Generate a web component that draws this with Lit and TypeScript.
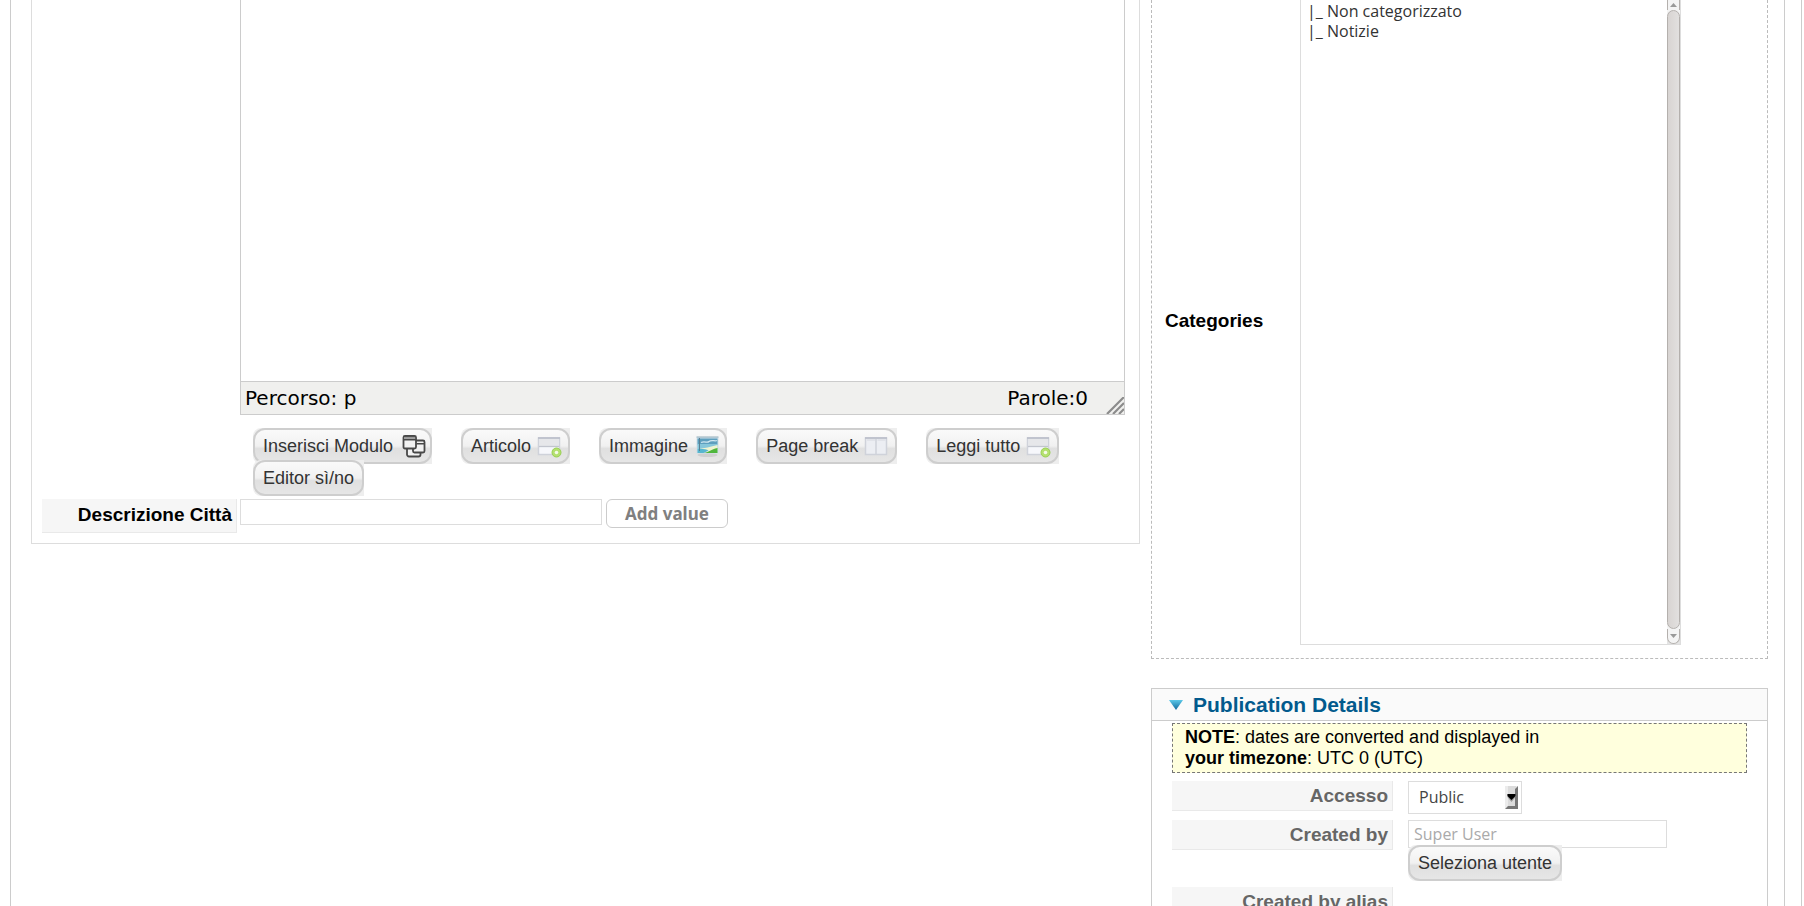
import { LitElement, html, css, svg, nothing } from "lit";
import { customElement, property } from "lit/decorators.js";

const moduleIcon = svg`
  <g fill="#f2f2f2" stroke="#484848" stroke-width="1.800" stroke-linejoin="round">
    <rect x="8" y="12" width="13.500" height="10.500" rx="2"/>
    <rect x="14" y="6.500" width="11.500" height="12" rx="1.500"/>
    <rect x="4.500" y="2" width="12.500" height="12.500" rx="1.500"/>
  </g>
  <rect x="5.400" y="2.900" width="10.700" height="2" fill="#999"/>
  <path d="M4.500 5.700h12.500M17.500 9.700h8" stroke="#484848" stroke-width="1.400"/>`;

const sheet = svg`
  <rect x="1.500" y="4" width="21" height="16.500" fill="#eceef3" stroke="#cfd2da" stroke-width="1.500"/>
  <path d="M1 4h22" stroke="#b9bcc8" stroke-width="1.500"/>`;

const articleIcon = svg`${sheet}
  <rect x="2.500" y="5" width="19" height="7" fill="#e6e7ea"/>
  <path d="M2 12.500h20" stroke="#c2c5ce" stroke-width="1.300"/>
  <rect x="2.500" y="13.500" width="19" height="6" fill="#f6f7fb"/>
  <circle cx="19.500" cy="18.500" r="4.500" fill="#b4e070" stroke="#98d050" stroke-width="1"/>
  <circle cx="19.500" cy="18.500" r="1.800" fill="#f4fbe8"/>`;

const imageIcon = svg`
  <ellipse cx="13.500" cy="21" rx="10" ry="2" fill="#cfcfcf"/>
  <rect x="2.500" y="3" width="22" height="16.500" fill="#cfdfe8"/>
  <rect x="3.500" y="4.500" width="20" height="6" fill="#5d9fbe"/>
  <rect x="3.500" y="10" width="20" height="5" fill="#86c6da"/>
  <path d="M7 8.500c4-2 6 1 8-1s6 0 8-1" stroke="#cfe7f1" stroke-width="1.300" fill="none"/>
  <path d="M4 15c7-1 12-2 19.500-4v5l-19.500 3z" fill="#eef3d0"/>
  <path d="M9 19c6-.5 8-4 14.500-5v5z" fill="#4fb63c"/>
  <path d="M3.500 15c5-.5 9 .500 11 1.500l-5 2.500h-6z" fill="#57b6cf"/>
  <path d="M5.500 4v13" stroke="#5a7f92" stroke-width="1"/>
  <path d="M2.500 3h22" stroke="#93aebb" stroke-width="1"/>`;

const breakIcon = svg`${sheet}
  <path d="M12 5v15" stroke="#cfd2da" stroke-width="1.500"/>
  <path d="M3 6h8M13.500 6h8" stroke="#dde0e6" stroke-width="1.500"/>`;

@customElement("pill-button")
class PillButton extends LitElement {
  @property() label = "";
  @property({ attribute: false }) icon: unknown = null;

  static styles = css`
    :host {
      display: inline-flex;
    }
    .pill {
      display: flex;
      height: 36px;
      padding: 0;
      border: 0;
      background: #eeeeee;
      font: 18px/20px "Liberation Sans", Arial, sans-serif;
      color: #333;
      cursor: pointer;
      border-radius: 8px 0 0 8px;
    }
    .face {
      display: flex;
      align-items: center;
      gap: 6px;
      box-sizing: border-box;
      height: 36px;
      padding: 0 8px;
      border: 2px solid #cecece;
      border-radius: 12px;
      background: linear-gradient(#fafafa 0, #f1f1f1 50%, #e0e0e0 58%, #e6e6e6 100%);
      white-space: nowrap;
    }
    .face.with-icon {
      padding-right: 7px;
    }
    .icon {
      width: 24px;
      height: 24px;
      flex: none;
      overflow: visible;
    }
  `;

  render() {
    return html`<button type="button" class="pill">
      <span class="face ${this.icon ? "with-icon" : ""}"
        >${this.label}${this.icon
          ? html`<svg class="icon" viewBox="0 0 24 24" aria-hidden="true">${this.icon}</svg>`
          : nothing}</span
      >
    </button>`;
  }
}

@customElement("app-root")
class AppRoot extends LitElement {
  static styles = css`
    :host {
      display: block;
      height: 100vh;
      overflow: hidden;
      background: #fff;
      color: #000;
      font: 18px/21px "Liberation Sans", Arial, sans-serif;
    }
    * {
      box-sizing: border-box;
    }
    .outer {
      min-height: 100%;
      display: flex;
      margin-right: 2px;
      padding: 0 16px 0 10px;
      border-right: 1px solid #ccc;
    }
    .frame {
      flex: 1;
      display: grid;
      grid-template-columns: minmax(0, 1109fr) minmax(0, 617fr);
      gap: 11px;
      align-items: start;
      padding: 0 16px 0 20px;
      border: solid #ccc;
      border-width: 0 1px;
    }
    .main {
      display: grid;
      grid-template-columns: 195px minmax(0, 1fr);
      column-gap: 3px;
      padding: 0 14px 10px 10px;
      border: 1px solid #ddd;
      border-top: 0;
    }
    .editor {
      grid-column: 2;
      display: flex;
      flex-direction: column;
      border: 1px solid #ccc;
      border-top: 0;
    }
    .content {
      height: 381px;
      padding: 8px;
      border: 0;
      outline: 0;
      resize: none;
      background: #fff;
      font: 16px "DejaVu Sans", Verdana, sans-serif;
    }
    .status {
      position: relative;
      display: flex;
      justify-content: space-between;
      padding: 5px 36px 5px 4px;
      border-top: 1px solid #ccc;
      background: #f0f0ee;
      font: 20px/22px "DejaVu Sans", Verdana, sans-serif;
    }
    .grip {
      position: absolute;
      right: 0;
      bottom: 0;
    }
    .tools {
      grid-column: 2;
      display: flex;
      flex-wrap: wrap;
      column-gap: 29px;
      padding: 13px 13px 7px;
    }
    .tools pill-button {
      margin-bottom: -4px;
    }
    .label {
      height: 30px;
      padding: 4px 4px 4px 0;
      border: solid #e9e9e9;
      border-width: 0 1px 1px 0;
      background: #f6f6f6;
      color: #666;
      font-size: 19px;
      line-height: 22px;
      font-weight: bold;
      text-align: right;
    }
    .label.tall {
      height: 34px;
      padding-top: 5px;
      color: #000;
    }
    .city {
      display: flex;
      align-items: flex-start;
      gap: 4px;
    }
    .text {
      height: 28px;
      padding: 0 5px;
      border: 1px solid #ddd;
      outline: 0;
      background: #fff;
      color: #333;
      font: 16px "Open Sans", Ubuntu, sans-serif;
    }
    .city .text {
      width: 362px;
      height: 26px;
    }
    .add {
      height: 29px;
      padding: 0 18px;
      border: 1px solid #ccc;
      border-radius: 6px;
      background: #fff;
      color: #808080;
      font: bold 17px/20px "Noto Sans", Ubuntu, sans-serif;
    }
    .categories {
      display: grid;
      grid-template-columns: 135px 381px;
      align-items: center;
      padding: 0 13px 13px;
      border: 1px dashed #bbb;
      border-top: 0;
    }
    .caption {
      padding-bottom: 4px;
      font-size: 19px;
      font-weight: bold;
    }
    .listbox {
      display: flex;
      height: 645px;
      border: 1px solid #ddd;
      border-top: 0;
    }
    .list {
      flex: 1;
      min-width: 0;
      padding: 0;
      border: 0;
      outline: 0;
      overflow: hidden;
      background: #fff;
      font: 16px/20px "Open Sans", Ubuntu, sans-serif;
      color: #333;
    }
    .list option {
      height: 20px;
      min-height: 20px;
      padding: 0 0 0 6px;
      line-height: 18px;
    }
    .scroll {
      display: flex;
      flex-direction: column;
      width: 13px;
      background: #e4e4e4;
    }
    .arrow {
      height: 15px;
      border: 1px solid #b4b0ad;
      background: #f4f4f4;
      display: grid;
      place-items: center;
    }
    .arrow.up {
      height: 10px;
      border-width: 0 1px;
    }
    .arrow.down {
      border-top: 0;
      border-radius: 0 0 7px 7px;
    }
    .trough {
      flex: 1;
      background: #f4f4f4;
      display: flex;
    }
    .thumb {
      flex: 1;
      border: 1px solid #b4b0ad;
      border-radius: 7px;
      background: linear-gradient(90deg, #d8d4d2, #e2e0df);
    }
    .details {
      margin-top: 29px;
      border: 1px solid #ccc;
      border-bottom: 0;
      height: 400px;
    }
    .head {
      display: flex;
      align-items: center;
      gap: 10px;
      margin: 0;
      height: 32px;
      padding: 0 17px;
      border-bottom: 1px solid #ccc;
      background: #fafafa;
      color: #025a8d;
      font-size: 21px;
      line-height: 24px;
      font-weight: bold;
    }
    .note {
      margin: 2px 20px 8px;
      padding: 3px 12px;
      border: 1px dashed #777;
      background: #ffffdd;
    }
    .rows {
      display: grid;
      grid-template-columns: 221px minmax(0, 1fr);
      gap: 6px 15px;
      align-items: start;
      padding: 0 20px;
    }
    .pick {
      position: relative;
      width: 114px;
    }
    .access {
      appearance: none;
      display: block;
      width: 100%;
      height: 33px;
      padding: 0 10px 2px;
      border: 1px solid #ddd;
      outline: 0;
      background: #fff;
      color: #444;
      font: 16px "Open Sans", Ubuntu, sans-serif;
    }
    .drop {
      position: absolute;
      right: 4px;
      top: 5px;
      pointer-events: none;
    }
    .user {
      display: flex;
      flex-direction: column;
      align-items: flex-start;
    }
    .user .text {
      width: 259px;
      color: #aaa;
    }
    .user pill-button {
      margin-top: -3px;
      position: relative;
    }
  `;

  render() {
    return html`<div class="outer">
      <div class="frame">
        <section class="main">
          <div class="editor">
            <textarea class="content" aria-label="Editor"></textarea>
            <div class="status">
              <span>Percorso: p</span><span>Parole:0</span>
              <svg class="grip" width="18" height="17" aria-hidden="true">
                <path d="M1 17L18 0M7 17L18 6M13 17L18 12" stroke="#8c8c8c" stroke-width="2.200" fill="none" />
              </svg>
            </div>
          </div>
          <div class="tools">
            <pill-button label="Inserisci Modulo" .icon=${moduleIcon}></pill-button>
            <pill-button label="Articolo" .icon=${articleIcon}></pill-button>
            <pill-button label="Immagine" .icon=${imageIcon}></pill-button>
            <pill-button label="Page break" .icon=${breakIcon}></pill-button>
            <pill-button label="Leggi tutto" .icon=${articleIcon}></pill-button>
            <pill-button label="Editor sì/no"></pill-button>
          </div>
          <label class="label tall" for="city">Descrizione Città</label>
          <div class="city">
            <input class="text" id="city" type="text" />
            <button class="add" type="button">Add value</button>
          </div>
        </section>
        <aside>
          <div class="categories">
            <label class="caption" for="cats">Categories</label>
            <div class="listbox">
              <select class="list" id="cats" multiple>
                <option>|_ Non categorizzato</option>
                <option>|_ Notizie</option>
              </select>
              <div class="scroll" aria-hidden="true">
                <span class="arrow up"><svg width="7" height="4"><path d="M0 4h7L3.500 0z" fill="#999" /></svg></span>
                <span class="trough"><span class="thumb"></span></span>
                <span class="arrow down"><svg width="7" height="4"><path d="M0 0h7L3.500 4z" fill="#999" /></svg></span>
              </div>
            </div>
          </div>
          <section class="details">
            <h3 class="head">
              <svg width="14" height="10" aria-hidden="true">
                <defs>
                  <linearGradient id="g" x2="0" y2="1">
                    <stop offset="0" stop-color="#5cc8e8" />
                    <stop offset="1" stop-color="#10689c" />
                  </linearGradient>
                </defs>
                <path d="M0 0h14L7 10z" fill="url(#g)" />
              </svg>
              Publication Details
            </h3>
            <p class="note">
              <b>NOTE</b>: dates are converted and displayed in<br /><b>your timezone</b>: UTC 0 (UTC)
            </p>
            <div class="rows">
              <label class="label" for="access">Accesso</label>
              <div class="pick">
                <select class="access" id="access">
                  <option>Public</option>
                </select>
                <svg class="drop" width="13" height="23" aria-hidden="true">
                  <rect width="13" height="23" fill="#ececec" />
                  <rect x="3" width="8" height="21" fill="#dcdcdc" />
                  <path d="M13 0v23H0l3-3h7V3z" fill="#777" />
                  <path d="M2.500 8h8v3l-4 5-4-5z" fill="#999" />
                  <path d="M2.500 8h8v2L6.500 14l-4-4z" fill="#000" />
                </svg>
              </div>
              <label class="label" for="author">Created by</label>
              <div class="user">
                <input class="text" id="author" type="text" value="Super User" readonly />
                <pill-button label="Seleziona utente"></pill-button>
              </div>
              <span class="label">Created by alias</span>
            </div>
          </section>
        </aside>
      </div>
    </div>`;
  }
}
